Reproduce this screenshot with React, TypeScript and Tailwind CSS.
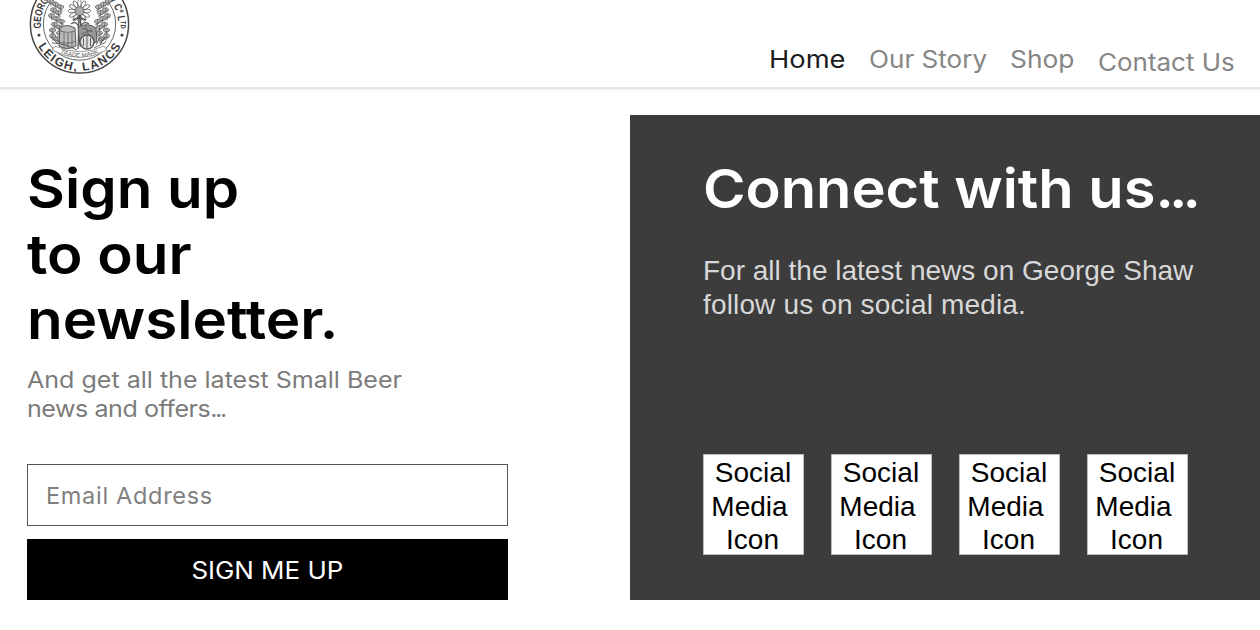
import React from "react";

const nav = [
  { label: "Home", cls: "text-[#1c1c1c] w-[76px] mr-6", scale: "scale-x-[1.115]" },
  { label: "Our Story", cls: "text-[#868686] w-[117px] mr-6", scale: "scale-x-[1.065]" },
  { label: "Shop", cls: "text-[#868686] w-[64px] mr-6", scale: "scale-x-[1.075]" },
  { label: "Contact Us", cls: "text-[#868686] w-[137px] pt-[3px]", scale: "scale-x-[1.06]" },
];

const leaves = Array.from({ length: 14 }, (_, i) => i);
const petals = Array.from({ length: 12 }, (_, i) => i);

function Seal() {
  return (
    <svg width="102" height="75" viewBox="28 0 102 75" className="block" fill="none" stroke="#555">
      <defs>
        <path id="sealLower" d="M32.5 24 A47 47 0 0 0 126.5 24" />
        <path id="sealUpper" d="M41.2 28.5 A38.6 38.6 0 1 1 117.8 28.5" />
        <path id="sealBanner" d="M56 50.8 Q79.5 63 103 50.8" />
      </defs>
      <circle cx="79.5" cy="24" r="49.1" strokeWidth="1.5" stroke="#484848" />
      <circle cx="79.5" cy="24" r="36.2" strokeWidth="0.9" />
      <g fill="#3a3a3a" stroke="none" fontFamily="Liberation Sans, sans-serif" fontWeight="700">
        <text fontSize="12" textAnchor="middle" letterSpacing="1.5">
          <textPath href="#sealLower" startOffset="50.5%">LEIGH, LANCS</textPath>
        </text>
        <text fontSize="10.6" textAnchor="middle">
          <textPath href="#sealUpper" startOffset="50%" textLength="130" lengthAdjust="spacingAndGlyphs">GEORGE SHAW BREWERY Cº Lᵀᴰ</textPath>
        </text>
        <circle cx="39" cy="35.2" r="1.4" />
        <circle cx="122" cy="35.2" r="1.4" />
      </g>
      <g strokeWidth="0.8" fill="#b5b5b5" stroke="#666">
        {leaves.map((i) => (
          <g key={i}>
            <path d={`M${47 + ((i * 5) % 12) + (i > 10 ? 2 : 0)} ${1 + i * 2.9} q3 -4 7 0 q-3 5 -7 0 m1 1 l5 3 m-3 -6 l1 7`} />
            <path d={`M${112 - ((i * 5) % 12) - (i > 10 ? 2 : 0)} ${1 + i * 2.9} q-3 -4 -7 0 q3 5 7 0 m-1 1 l-5 3 m3 -6 l-1 7`} />
          </g>
        ))}
      </g>
      {petals.map((i) => (
        <ellipse key={i} cx="79.5" cy="3.5" rx="1.8" ry="4" strokeWidth="0.7" transform={`rotate(${i * 30} 79.5 11)`} />
      ))}
      <circle cx="79.5" cy="11" r="4.5" fill="#aaa" strokeWidth="0.8" />
      <path d="M73 20 Q79 16 86 20 M79 15 L78 49 M80 15 L81 30 M71 24 Q77 20 79 28 Q83 20 89 24" strokeWidth="1.3" />
      <path d="M60 28 Q66 23 75 28 L76 46 Q67 51 59 46 Z" fill="#bbb" strokeWidth="1" />
      <path d="M78 27 Q88 22 96 28 L97 42 L80 46 Z" fill="#999" strokeWidth="1" />
      <path d="M60 31 Q68 34 75 31 M59 42 Q68 45 76 41 M64 32 V48 M68 33 V49 M72 32 V48 M82 28 L93 32 M85 25 L90 39 M81 34 L92 30" strokeWidth="0.7" />
      <circle cx="87" cy="42" r="7" fill="#ddd" strokeWidth="1.4" />
      <path d="M83.5 38 V46 M87 36 V48 M90.5 38 V46 M52 43 Q64 43 77 50 M94 48 L106 42 M53 39 l5 5 M100 38 l-4 7 M105 37 l-5 7" strokeWidth="0.9" />
      <path d="M55 46 Q79.5 57.5 104 46 L107 50 Q79.5 65 52 50 Z" fill="#fff" strokeWidth="0.6" />
      <text fill="#555" stroke="none" fontSize="5.5" fontFamily="Liberation Sans, sans-serif" textAnchor="middle">
        <textPath href="#sealBanner" startOffset="50%" textLength="40" lengthAdjust="spacingAndGlyphs">TRADE MARK</textPath>
      </text>
    </svg>
  );
}

export default function App() {
  return (
    <div className="h-[630px] w-[1260px] overflow-hidden bg-white font-[Inter,sans-serif]">
      <header className="flex h-[87px] items-start justify-between pl-7 pr-[25px] shadow-[0_2px_1px_#e6e6e6,0_3px_4px_#eeeeee]">
        <Seal />
        <nav className="flex pt-[43px] text-[24.5px] leading-8">
          {nav.map((n) => (
            <a key={n.label} className={`whitespace-nowrap ${n.cls}`}>
              <span className={`inline-block origin-left ${n.scale}`}>{n.label}</span>
            </a>
          ))}
        </nav>
      </header>
      <main className="flex pt-7">
        <section className="w-[630px] pl-[27px] pt-[41px]">
          <h2 className="w-[300px] origin-left scale-x-[1.08] text-[54px] font-semibold leading-[65.5px] text-black">
            <span className="block">Sign up</span>
            <span className="block">to our</span>
            <span className="block">newsletter.</span>
          </h2>
          <p className="mt-[12px] w-[340px] origin-left scale-x-[1.113] whitespace-nowrap text-[22.5px] leading-[29px] text-[#7b7b7b]">
            And get all the latest Small Beer<br /><span className="tracking-[-0.4px]">news and offers</span><span className="tracking-[-2.2px]">...</span>
          </p>
          <form className="mt-[41px] w-[481px]">
            <input placeholder="Email Address" className="block h-[62px] w-full border border-[#555] px-[18px] pt-[2px] text-[23.5px] tracking-[0.7px] text-[#777] placeholder:text-[#808080]" />
            <button type="button" className="mt-[13px] block h-[61px] w-full bg-black pt-[3px] text-[24px] text-white">
              <span className="inline-block scale-x-[1.08]">SIGN ME UP</span>
            </button>
          </form>
        </section>
        <section className="h-[485px] w-[630px] bg-[#3c3c3c] pl-[73px] pt-[41px]">
          <h2 className="w-[480px] origin-left scale-x-[1.07] whitespace-nowrap text-[54px] font-semibold leading-[65px] text-white">
            Connect with us<span className="tracking-[-4.6px]">...</span>
          </h2>
          <p className="mt-[33px] whitespace-nowrap font-['Liberation_Sans',sans-serif] text-[28px] leading-[34px] text-[#d8d8d8]">
            For all the latest news on George Shaw<br /><span className="tracking-[0.15px]">follow us on social media.</span>
          </p>
          <ul className="mt-[132px] flex gap-[27px] font-['Liberation_Sans',sans-serif] text-[28px] leading-[33.5px]">
            {[0, 1, 2, 3].map((i) => (
              <li key={i} className="h-[101px] w-[101px] border border-[#bbb] bg-white pr-[2px] pt-px text-center text-black">
                <span className="block pl-px">Social</span>
                <span className="block pr-[6px]">Media</span>
                <span className="block">Icon</span>
              </li>
            ))}
          </ul>
        </section>
      </main>
    </div>
  );
}
